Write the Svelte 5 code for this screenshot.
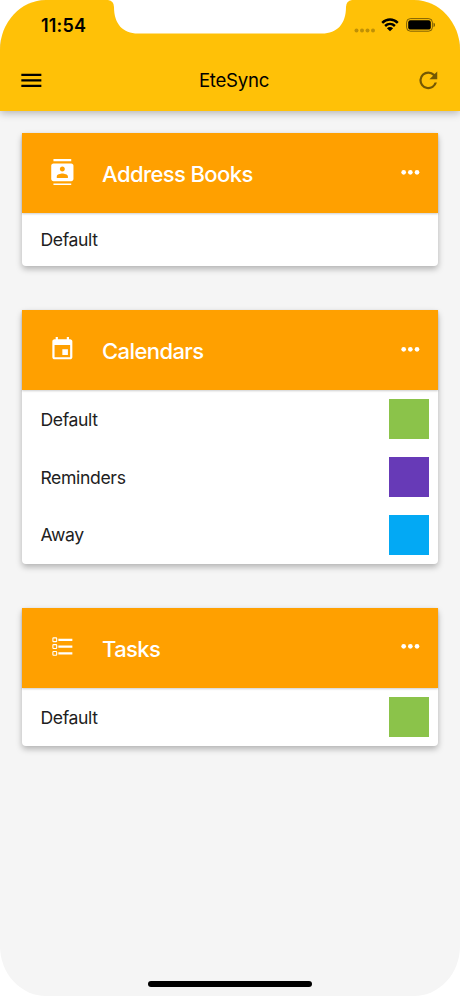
<script>
    const sections = [
        {
            icon: 'contacts',
            title: 'Address Books',
            items: [{ name: 'Default' }],
        },
        {
            icon: 'event',
            title: 'Calendars',
            items: [
                { name: 'Default', color: '#8bc34a' },
                { name: 'Reminders', color: '#673ab7' },
                { name: 'Away', color: '#03a9f4' },
            ],
        },
        {
            icon: 'tasks',
            title: 'Tasks',
            items: [{ name: 'Default', color: '#8bc34a' }],
        },
    ];
</script>

<div class="phone">
    <header>
        <!-- display cutout -->
        <svg class="notch" width="250" height="35" viewBox="0 0 250 35">
            <path d="M0 0H3Q9 1 9 7C9 24 18 33.5 33 33.5H217C232 33.5 241 24 241 7Q241 1 247 0H250Z" fill="#fff" />
        </svg>

        <div class="status">
            <span class="time">11:54</span>
            <div class="indicators">
                <svg class="signal" width="22" height="5" viewBox="0 0 22 5">
                    <circle cx="2.5" cy="2.5" r="2" />
                    <circle cx="8" cy="2.5" r="2" />
                    <circle cx="13.5" cy="2.5" r="2" />
                    <circle cx="19" cy="2.5" r="2" />
                </svg>
                <svg class="wifi" width="18" height="14" viewBox="0 0 18 14">
                    <path d="M1.2 4.9C5.8.5 12.2.5 16.8 4.9M4.1 8C7 5.3 11 5.3 13.9 8" fill="none" stroke="#000" stroke-width="2.5" />
                    <path d="M9 13.3L5.9 10.3C7.7 8.7 10.3 8.7 12.1 10.3Z" />
                </svg>
                <svg class="battery" width="30" height="14" viewBox="0 0 30 14">
                    <rect x=".6" y=".6" width="25.8" height="12.6" rx="3.8" fill="none" stroke="#000" stroke-opacity=".5" />
                    <rect x="2.2" y="2.2" width="22.6" height="9.4" rx="2.2" />
                    <path d="M27.5 4.7C29.6 5.2 29.6 8.6 27.5 9.1Z" opacity=".5" />
                </svg>
            </div>
        </div>

        <div class="toolbar">
            <button aria-label="Menu">
                <svg class="icon" viewBox="0 0 24 24">
                    <path d="M3 18h18v-2H3v2zm0-5h18v-2H3v2zm0-7v2h18V6H3z" />
                </svg>
            </button>
            <h1>EteSync</h1>
            <button class="refresh" aria-label="Refresh">
                <svg class="icon" viewBox="0 0 24 24">
                    <path d="M17.65 6.35A7.96 7.96 0 0 0 12 4a8 8 0 1 0 7.73 10h-2.08A6 6 0 1 1 12 6c1.66 0 3.14.69 4.22 1.78L13 11h7V4l-2.35 2.35z" />
                </svg>
            </button>
        </div>
    </header>

    <main>
        {#each sections as section}
            <section class="card">
                <div class="card-header">
                    <svg class="icon" viewBox="0 0 24 24">
                        {#if section.icon === 'contacts'}
                            <path d="M20 0H4v2h16V0zM4 24h16v-2H4v2zM20 4H4c-1.1 0-2 .9-2 2v12c0 1.1.9 2 2 2h16c1.1 0 2-.9 2-2V6c0-1.1-.9-2-2-2zm-8 2.75c1.24 0 2.25 1.01 2.25 2.25s-1.01 2.25-2.25 2.25S9.75 10.24 9.75 9 10.76 6.75 12 6.75zM17 17H7v-1.5c0-1.67 3.33-2.5 5-2.5s5 .83 5 2.5V17z" />
                        {:else if section.icon === 'event'}
                            <path d="M17 12h-5v5h5v-5zM16 1v2H8V1H6v2H5c-1.11 0-1.99.9-1.99 2L3 19c0 1.1.89 2 2 2h14c1.1 0 2-.9 2-2V5c0-1.1-.9-2-2-2h-1V1h-2zm3 18H5V8h14v11z" />
                        {:else}
                            <g fill="none" stroke="#fff">
                                <rect x="3.5" y="4.4" width="3.4" height="3.4" rx=".6" />
                                <rect x="3.5" y="10.5" width="3.4" height="3.4" rx=".6" />
                                <rect x="3.5" y="16.6" width="3.4" height="3.4" rx=".6" />
                            </g>
                            <path d="M8.4 5.1H21v2H8.4zM8.4 11.2H21v2H8.4zM8.4 17.3H21v2H8.4z" />
                        {/if}
                    </svg>
                    <h2>{section.title}</h2>
                    <button aria-label="More">
                        <svg class="icon" viewBox="0 0 24 24">
                            <circle cx="6" cy="12" r="2.1" />
                            <circle cx="12" cy="12" r="2.1" />
                            <circle cx="18" cy="12" r="2.1" />
                        </svg>
                    </button>
                </div>
                <ul>
                    {#each section.items as item}
                        <li class:colored={item.color}>
                            <span>{item.name}</span>
                            {#if item.color}
                                <i class="swatch" style="background: {item.color}"></i>
                            {/if}
                        </li>
                    {/each}
                </ul>
            </section>
        {/each}
    </main>

    <div class="home-bar"></div>
</div>

<style>
    :global(body) {
        background: #fff;
    }
    .phone {
        box-sizing: border-box;
        display: flex;
        flex-direction: column;
        width: 460px;
        height: 996px;
        overflow: hidden;
        border-radius: 46px / 50px;
        background: #f5f5f5;
        color: #212121;
        font-family: Inter, "Liberation Sans", sans-serif;
    }
    button {
        display: flex;
        padding: 0;
        border: 0;
        background: none;
        color: inherit;
    }
    .icon {
        display: block;
        width: 26.7px;
        height: 26.7px;
        fill: currentColor;
    }

    /* app bar */
    header {
        position: relative;
        flex: none;
        height: 111px;
        background: #ffc107;
        color: #000;
        box-shadow: 0 2px 8px rgba(0, 0, 0, .28);
    }
    .notch {
        position: absolute;
        top: 0;
        left: 105px;
    }
    .status {
        display: flex;
        align-items: center;
        justify-content: space-between;
        height: 50px;
        padding: 0 24px 0 41px;
    }
    .time {
        font-size: 18px;
        font-weight: 600;
        letter-spacing: .2px;
    }
    .indicators {
        display: flex;
        align-items: center;
        margin-right: .5px;
    }
    .signal {
        margin: 10px 5px 0 0;
        opacity: .25;
    }
    .battery {
        margin-left: 7px;
    }
    .toolbar {
        display: flex;
        align-items: center;
        justify-content: space-between;
        height: 61px;
        padding: 0 18px;
    }
    h1 {
        margin: 0 0 2px 8px;
        font-size: 18.6px;
        font-weight: 400;
        letter-spacing: -.25px;
    }
    .refresh {
        opacity: .54;
    }

    /* collections */
    main {
        flex: 1;
        display: flex;
        flex-direction: column;
        gap: 44.5px;
        padding: 22.4px 22.4px 0;
    }
    .card {
        border-radius: 4px;
        background: #fff;
        box-shadow: 0 3px 6px rgba(0, 0, 0, .28);
    }
    .card-header {
        display: flex;
        align-items: center;
        box-sizing: border-box;
        height: 80px;
        padding: 0 13.5px 3px 26.7px;
        background: #ffa000;
        color: #fff;
        box-shadow: 0 1px 2px rgba(0, 0, 0, .2);
    }
    h2 {
        flex: 1;
        margin: 4px 0 0 26.3px;
        font-size: 22px;
        font-weight: 500;
        letter-spacing: -.6px;
    }
    ul {
        margin: 0;
        padding: 0;
        list-style: none;
    }
    li {
        display: flex;
        align-items: center;
        justify-content: space-between;
        height: 52.5px;
        padding: 0 9px 0 18px;
        font-size: 17.6px;
        letter-spacing: -.35px;
    }
    li.colored {
        height: 57.8px;
    }
    .swatch {
        width: 40px;
        height: 40px;
    }
    .home-bar {
        flex: none;
        align-self: center;
        width: 164px;
        height: 6px;
        margin-bottom: 9px;
        border-radius: 3px;
        background: #000;
    }
</style>
